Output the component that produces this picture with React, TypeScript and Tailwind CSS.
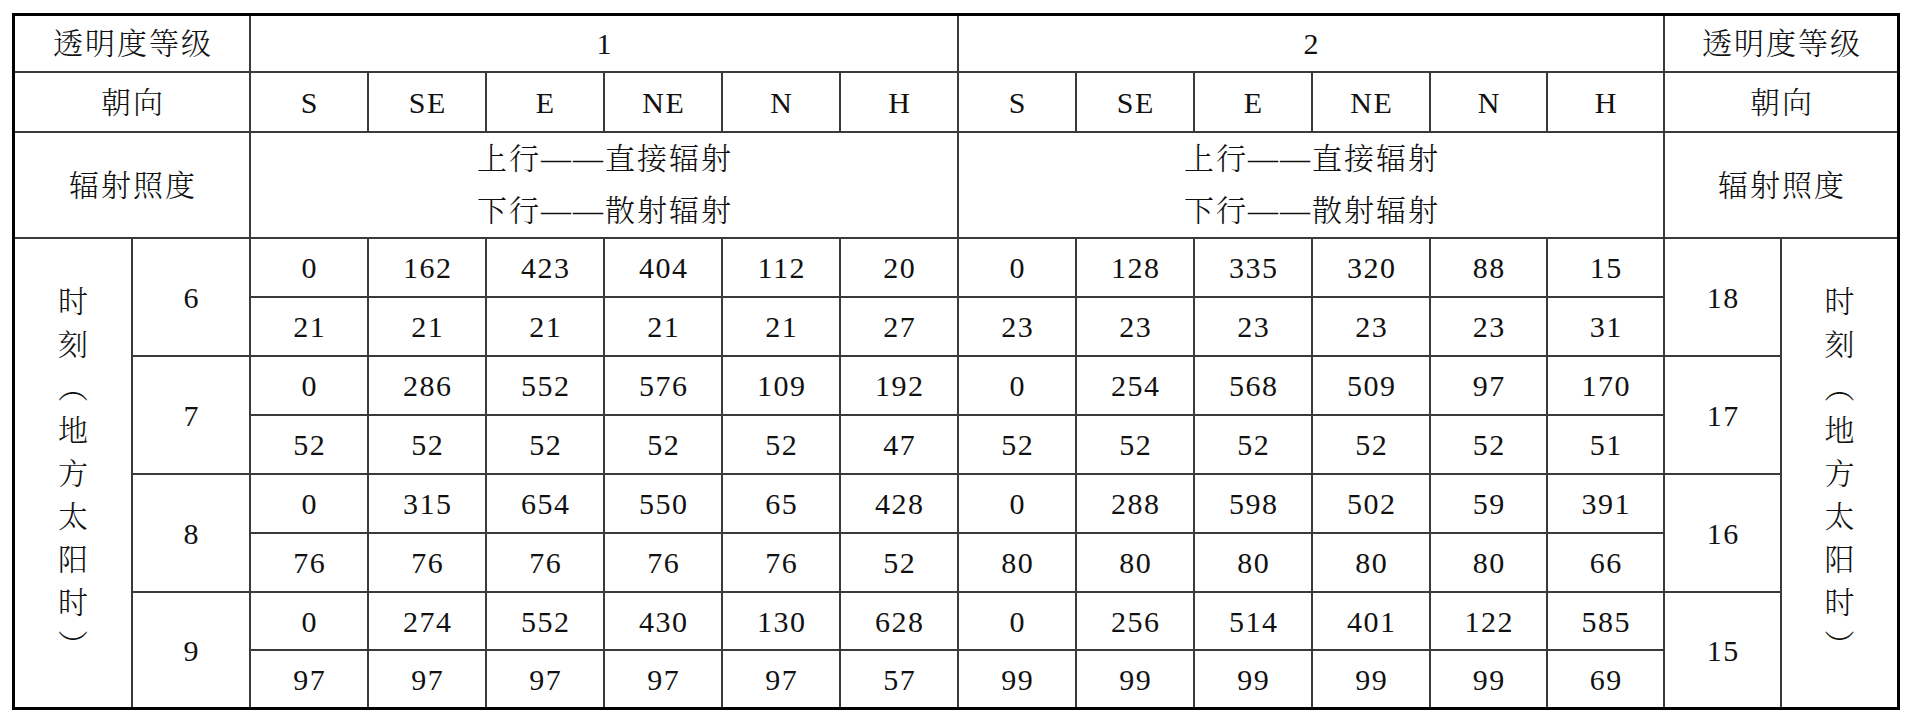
import React from "react";

const dirs = ["S", "SE", "E", "NE", "N", "H"];

const rows = [
  {
    left: "6",
    right: "18",
    a: [
      ["0", "162", "423", "404", "112", "20"],
      ["21", "21", "21", "21", "21", "27"],
    ],
    b: [
      ["0", "128", "335", "320", "88", "15"],
      ["23", "23", "23", "23", "23", "31"],
    ],
  },
  {
    left: "7",
    right: "17",
    a: [
      ["0", "286", "552", "576", "109", "192"],
      ["52", "52", "52", "52", "52", "47"],
    ],
    b: [
      ["0", "254", "568", "509", "97", "170"],
      ["52", "52", "52", "52", "52", "51"],
    ],
  },
  {
    left: "8",
    right: "16",
    a: [
      ["0", "315", "654", "550", "65", "428"],
      ["76", "76", "76", "76", "76", "52"],
    ],
    b: [
      ["0", "288", "598", "502", "59", "391"],
      ["80", "80", "80", "80", "80", "66"],
    ],
  },
  {
    left: "9",
    right: "15",
    a: [
      ["0", "274", "552", "430", "130", "628"],
      ["97", "97", "97", "97", "97", "57"],
    ],
    b: [
      ["0", "256", "514", "401", "122", "585"],
      ["99", "99", "99", "99", "99", "69"],
    ],
  },
];

const vertical = ["时", "刻", "︵", "地", "方", "太", "阳", "时", "︶"];

const cell = "bg-white flex items-center justify-center";
const cjk = "tracking-[2px] pl-[2px] font-light";
const num = "tracking-[1.5px] pl-[1.5px]";

function VerticalLabel() {
  return (
    <div className={`${cell} row-span-8 flex-col`}>
      {vertical.map((ch, i) => (
        <span key={i} className="leading-[43px] font-light">
          {ch}
        </span>
      ))}
    </div>
  );
}

function RadiationNote() {
  return (
    <div className={`${cell} col-span-6 flex-col`}>
      <span className={`${cjk} leading-[52px]`}>上行——直接辐射</span>
      <span className={`${cjk} leading-[52px]`}>下行——散射辐射</span>
    </div>
  );
}

export default function App() {
  return (
    <div className="min-h-screen bg-white pt-[13px] pl-[12px] text-[#111] text-[30px] font-['Liberation_Serif','Noto_Serif_CJK_SC','Noto_Sans_CJK_SC',serif]">
      <div className="grid w-[1888px] h-[697px] border-[3px] border-black bg-[#3a3a3a] gap-[2px] grid-cols-[repeat(12,116px)_repeat(4,115px)] grid-rows-[55px_58px_104px_57px_57px_57px_57px_57px_57px_56px_56px]">
        {/* 第一行 */}
        <div className={`${cell} col-span-2 ${cjk}`}>透明度等级</div>
        <div className={`${cell} col-span-6 ${num}`}>1</div>
        <div className={`${cell} col-span-6 ${num}`}>2</div>
        <div className={`${cell} col-span-2 ${cjk}`}>透明度等级</div>

        {/* 朝向 */}
        <div className={`${cell} col-span-2 ${cjk}`}>朝向</div>
        {[...dirs, ...dirs].map((d, i) => (
          <div key={i} className={`${cell} ${num}`}>
            {d}
          </div>
        ))}
        <div className={`${cell} col-span-2 ${cjk}`}>朝向</div>

        {/* 辐射照度 */}
        <div className={`${cell} col-span-2 ${cjk}`}>辐射照度</div>
        <RadiationNote />
        <RadiationNote />
        <div className={`${cell} col-span-2 ${cjk}`}>辐射照度</div>

        {/* 数据 */}
        {rows.map((r, ri) => (
          <React.Fragment key={ri}>
            {ri === 0 && <VerticalLabel />}
            <div className={`${cell} row-span-2 ${num}`}>{r.left}</div>
            {[...r.a[0], ...r.b[0]].map((v, i) => (
              <div key={"t" + i} className={`${cell} ${num}`}>
                {v}
              </div>
            ))}
            <div className={`${cell} row-span-2 ${num}`}>{r.right}</div>
            {ri === 0 && <VerticalLabel />}
            {[...r.a[1], ...r.b[1]].map((v, i) => (
              <div key={"b" + i} className={`${cell} ${num}`}>
                {v}
              </div>
            ))}
          </React.Fragment>
        ))}
      </div>
    </div>
  );
}
